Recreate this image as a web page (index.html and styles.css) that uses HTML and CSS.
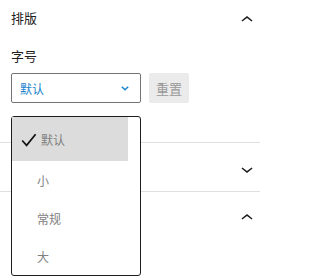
FILE: index.html
```html
<!DOCTYPE html>
<html lang="zh-CN">
<head>
<meta charset="utf-8">
<link rel="stylesheet" href="styles.css">
</head>
<body>
<div class="panel">
  <section class="sec sec-open">
    <div class="sec-head">
      <span class="sec-title">排版</span>
      <svg class="chev" width="24" height="24" viewBox="0 0 24 24"><path d="M6.5 12.4L12 8l5.5 4.4-.9 1.2L12 10l-4.6 3.6-1-1.2z"/></svg>
    </div>
    <div class="field-label">字号</div>
    <div class="field-row">
      <div class="select">
        <span class="select-value">默认</span>
        <svg class="select-arrow" width="8" height="5" viewBox="0 0 8 5"><polyline points="0.8,0.8 4,3.8 7.2,0.8" fill="none" stroke="#1a84cc" stroke-width="1.5"/></svg>
      </div>
      <div class="reset">重置</div>
    </div>
  </section>
  <section class="sec sec-closed">
    <div class="sec-head sec-head-tall">
      <span class="sec-title"></span>
      <svg class="chev" width="24" height="24" viewBox="0 0 24 24"><path d="M17.5 11.6L12 16l-5.5-4.4.9-1.2L12 14l4.6-3.6 1 1.2z"/></svg>
    </div>
  </section>
  <section class="sec sec-last">
    <div class="sec-head sec-head-tall">
      <span class="sec-title"></span>
      <svg class="chev" width="24" height="24" viewBox="0 0 24 24"><path d="M6.5 12.4L12 8l5.5 4.4-.9 1.2L12 10l-4.6 3.6-1-1.2z"/></svg>
    </div>
  </section>

  <ul class="menu">
    <li class="item item-checked">
      <svg class="check" width="16" height="14" viewBox="0 0 16 14"><polyline points="1.2,7.5 5.6,12.4 14.6,1.2" fill="none" stroke="#111" stroke-width="1.7"/></svg>
      <span>默认</span>
    </li>
    <li class="item">小</li>
    <li class="item">常规</li>
    <li class="item">大</li>
  </ul>
</div>
</body>
</html>
```
FILE: styles.css
```css
html, body {
  margin: 0;
  padding: 0;
  background: #fff;
}
body {
  font-family: "Noto Sans CJK SC", "Noto Sans", sans-serif;
  color: #1e1e1e;
}
.panel {
  position: relative;
  width: 260px;
  height: 280px;
  overflow: hidden;
}
.sec {
  border-bottom: 1px solid #e0e0e0;
}
.sec-open {
  padding: 0 0 39px 11px;
}
.sec-closed, .sec-last {
  padding-left: 11px;
}
.sec-last {
  border-bottom: none;
}
.sec-head {
  display: flex;
  align-items: center;
  justify-content: space-between;
  height: 36px;
  padding-right: 1px;
}
.sec-head-tall {
  height: 48px;
}
.sec-title {
  font-size: 13px;
  line-height: 16px;
}
.chev {
  margin-top: 4px;
  fill: #1e1e1e;
}
.field-label {
  margin-top: 12px;
  font-size: 13px;
  line-height: 16px;
}
.field-row {
  display: flex;
  gap: 8px;
  margin-top: 9px;
}
.select {
  box-sizing: border-box;
  width: 130px;
  height: 30px;
  border: 1px solid #757575;
  border-radius: 2px;
  display: flex;
  align-items: center;
  justify-content: space-between;
  padding: 0 11px 0 8px;
}
.select-value {
  font-size: 12px;
  color: #1a84cc;
}
.select-arrow {
  margin-top: 1px;
}
.reset {
  box-sizing: border-box;
  width: 40px;
  height: 30px;
  border-radius: 2px;
  background: #ebebeb;
  color: #999;
  font-size: 13px;
  display: flex;
  align-items: center;
  justify-content: center;
}
.menu {
  position: absolute;
  left: 11px;
  top: 116px;
  box-sizing: border-box;
  width: 130px;
  height: 160px;
  margin: 0;
  padding: 0;
  list-style: none;
  border: 1px solid #1e1e1e;
  border-radius: 3px;
  background: #fff;
}
.item {
  display: flex;
  align-items: center;
  height: 38px;
  width: 116px;
  padding-left: 25px;
  box-sizing: border-box;
  font-size: 12px;
  color: #808080;
}
.item-checked {
  height: 44px;
  padding-left: 9px;
  background: #dcdcdc;
  gap: 4px;
}
.check {
  margin-top: 1px;
}
```
